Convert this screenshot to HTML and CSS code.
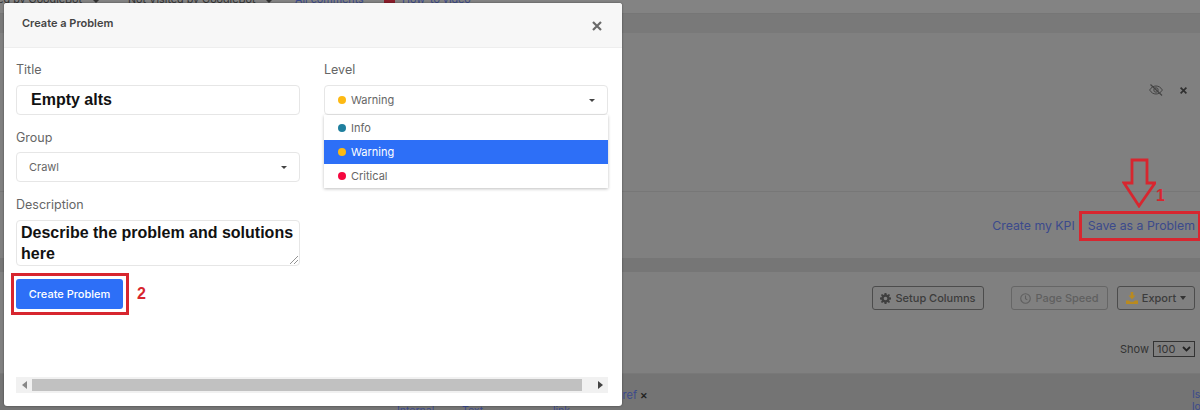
FILE: index.html
```html
<!DOCTYPE html>
<html lang="en">
  <head>
    <meta charset="UTF-8" />
    <meta name="viewport" content="width=device-width, initial-scale=1.0" />
    <title>Create a Problem</title>
    <link rel="stylesheet" href="styles.css">
  </head>
  <body>
    <!-- Dimmed page behind the modal -->
    <div class="page">
      <div class="tabs">
        <span class="tab-first">ed by GoogleBot</span>
        <span class="tab-caret"></span>
        <span class="tab-second">Not Visited by GoogleBot</span>
        <span class="tab-caret"></span>
        <a class="tab-link">All comments</a>
        <span class="video-icon"></span>
        <a class="tab-link">How-to video</a>
      </div>
      <div class="tone-band"></div>

      <section class="panel">
        <div class="panel-icons">
          <svg width="14" height="12" viewBox="0 0 14 12" fill="none" stroke="#444" stroke-width="1">
            <path d="M.6 6C2.400 3.200 4.500 2 7 2s4.600 1.200 6.400 4C11.600 8.800 9.500 10 7 10S2.400 8.800.6 6z" />
            <circle cx="7" cy="6" r="2.200" />
            <path d="M1.500.5l11.500 11" stroke-width="1.200" />
          </svg>
          <svg width="7" height="7" viewBox="0 0 7 7" stroke="#2f2f2f" stroke-width="1.700">
            <path d="M.6.6l5.800 5.800M6.400.6L.6 6.400" />
          </svg>
        </div>
      </section>
      <div class="panel-links">
        <a class="kpi-link">Create my KPI</a>
        <a class="problem-link">Save as a Problem</a>
      </div>
      <div class="tone-band small"></div>

      <section class="toolbar">
        <div class="toolbar-buttons">
          <button class="tool-btn setup-btn">
            <svg width="11" height="11" viewBox="0 0 12 12" fill="#3f3f3f">
              <path d="M5 0h2l.3 1.700 1 .4L9.700 1l1.300 1.300-1.100 1.400.4 1L12 5v2l-1.700.3-.4 1 1.100 1.400L9.700 11l-1.400-1.100-1 .4L7 12H5l-.3-1.700-1-.4L2.300 11 1 9.700l1.100-1.400-.4-1L0 7V5l1.700-.3.4-1L1 2.300 2.300 1l1.400 1.100 1-.4zM6 4a2 2 0 1 0 0 4 2 2 0 0 0 0-4z" />
            </svg>
            Setup Columns
          </button>
          <button class="tool-btn speed-btn">
            <svg width="11" height="11" viewBox="0 0 12 12" fill="none" stroke="#5f5f5f" stroke-width="1.200">
              <circle cx="6" cy="6" r="5.200" />
              <path d="M6 2.800V6.300l2 1.200" />
            </svg>
            Page Speed
          </button>
          <button class="tool-btn export-btn">
            <svg width="12" height="12" viewBox="0 0 12 12" fill="#b98a1f">
              <path d="M4.700 0h2.600v3.500h2.200L6 7.300 2.500 3.500h2.200zM0 8.500h3l1.500 1.300h3L9 8.500h3V12H0z" />
            </svg>
            Export
            <span class="btn-caret"></span>
          </button>
        </div>
        <div class="show-row">
          <span>Show</span>
          <span class="show-select">100
            <svg width="9" height="6" viewBox="0 0 9 6" fill="none" stroke="#222" stroke-width="1.800"><path d="M1 1l3.500 3.500L8 1" /></svg>
          </span>
        </div>
      </section>

      <section class="table-head">
        <div class="filter-tag">href <b>&#10005;</b></div>
        <div class="col-row">
          <a class="col-internal">Internal</a>
          <a class="col-text">Text</a>
          <a class="col-link">link</a>
        </div>
        <a class="col-last">Is<br>lo</a>
      </section>
    </div>

    <!-- Modal -->
    <div class="modal">
      <div class="modal-header">
        <h5 class="modal-title">Create a Problem</h5>
        <svg class="modal-close" width="10" height="10" viewBox="0 0 10 10" stroke="#6a6a6a" stroke-width="2.200">
          <path d="M1 1l8 8M9 1l-8 8" />
        </svg>
      </div>
      <div class="modal-body">
        <div class="col">
          <label class="form-label">Title</label>
          <div class="form-input title-input">Empty alts</div>
          <label class="form-label">Group</label>
          <div class="form-input select-input group-select">
            <span>Crawl</span>
            <span class="caret"></span>
          </div>
          <label class="form-label">Description</label>
          <div class="form-input desc-input">
            Describe the problem and solutions here
            <svg class="resize-grip" width="8" height="8" viewBox="0 0 8 8" stroke="#777" stroke-width="0.800">
              <path d="M0 8l8-8M4 8l4-4" />
            </svg>
          </div>
          <button class="submit-btn">Create Problem</button>
        </div>
        <div class="col level-col">
          <label class="form-label">Level</label>
          <div class="form-input select-input level-select">
            <span class="level-value"><i class="dot yellow"></i>Warning</span>
            <span class="caret"></span>
          </div>
          <ul class="level-menu">
            <li class="level-item"><i class="dot teal"></i>Info</li>
            <li class="level-item active"><i class="dot yellow"></i>Warning</li>
            <li class="level-item"><i class="dot red"></i>Critical</li>
          </ul>
        </div>
      </div>
      <div class="scrollbar">
        <span class="arrow-left"></span>
        <span class="thumb"></span>
        <span class="arrow-right"></span>
      </div>
    </div>

    <!-- Red tutorial marks -->
    <svg class="mark-arrow" width="34" height="50" viewBox="0 0 34 50" fill="none" stroke="#d7262f" stroke-width="2.800">
      <path d="M10 2h15v23h8L17 48 2 25h8z" />
    </svg>
    <span class="mark-num one">1</span>
    <div class="mark-box box-save"></div>
    <div class="mark-box box-create"></div>
    <span class="mark-num two">2</span>
  </body>
</html>
```

FILE: styles.css
```css
* {
  margin: 0;
  padding: 0;
  box-sizing: border-box;
  font-family: "Inter", sans-serif;
}

body {
  width: 1200px;
  height: 410px;
  overflow: hidden;
  background: #808080;
  position: relative;
}

/* Page behind the modal */
.page {
  height: 410px;
  overflow: hidden;
  color: #3a3a3a;
  font-size: 11px;
}

.tabs {
  height: 13px;
  background: #838383;
  display: flex;
  align-items: flex-start;
  line-height: 13px;
  font-size: 10.750px;
  overflow: hidden;
  color: #333;
}

.tabs > * {
  position: relative;
  top: -7px;
  flex: none;
}

.tab-first {
  width: 82px;
  text-align: right;
  white-space: nowrap;
  direction: rtl;
}

.tab-second {
  width: 127px;
  margin-left: 29px;
  white-space: nowrap;
}

.tabs .tab-caret {
  top: 0;
  margin-left: 11px;
  border-top: 3px solid #333;
  border-left: 3.500px solid transparent;
  border-right: 3.500px solid transparent;
}

.tab-link {
  color: #3b4a8c;
  width: 89px;
}

.tab-caret + .tab-link {
  margin-left: 23px;
}

.tabs .video-icon {
  width: 11px;
  height: 6px;
  background: #8a1c2a;
  border-radius: 0 0 2px 2px;
  margin-right: 7px;
  top: 0;
}

.tone-band {
  height: 20px;
  background: #797979;
  border-top: 1px solid #767676;
}

.tone-band.small {
  height: 14px;
  background: #767676;
  border-top: none;
}

.panel {
  height: 159px;
  border-bottom: 1px solid #777;
  padding: 51px 13px 0 0;
}

.panel-icons {
  display: flex;
  justify-content: flex-end;
  align-items: center;
  gap: 17px;
}

.panel-links {
  height: 66px;
  display: flex;
  justify-content: flex-end;
  gap: 13px;
  padding: 26px 5px 0 0;
  font-size: 12.300px;
  color: #3b4a8c;
}

.toolbar {
  height: 102px;
  padding: 14px 5px 0 0;
  display: flex;
  flex-direction: column;
  align-items: flex-end;
  border-bottom: 1px solid #787878;
}

.toolbar-buttons {
  display: flex;
}

.tool-btn {
  height: 24px;
  display: flex;
  align-items: center;
  justify-content: center;
  gap: 4px;
  background: transparent;
  border: 1px solid #4c4c4c;
  border-radius: 3px;
  font-size: 11px;
  font-weight: 500;
  color: #3c3c3c;
}

.setup-btn {
  width: 112px;
  margin-right: 27px;
}

.speed-btn {
  width: 97px;
  margin-right: 9px;
  color: #5f5f5f;
  border-color: #666;
}

.export-btn {
  width: 78px;
}

.btn-caret {
  border-top: 4px solid #333;
  border-left: 3.500px solid transparent;
  border-right: 3.500px solid transparent;
}

.show-row {
  display: flex;
  align-items: center;
  gap: 4px;
  margin-top: 31px;
  font-size: 11px;
  color: #333;
}

.show-select {
  width: 42px;
  height: 16px;
  border: 1px solid #333;
  display: flex;
  align-items: center;
  justify-content: space-between;
  padding: 0 3px;
}

.table-head {
  height: 36px;
  background: #747474;
  position: relative;
  font-size: 10.500px;
  color: #3b4a8c;
}

.filter-tag {
  padding: 15px 0 0 616px;
  line-height: 13px;
  font-size: 11px;
}

.filter-tag b {
  color: #222;
  font-size: 9px;
}

.col-row {
  display: flex;
  padding-left: 397px;
  margin-top: 2px;
}

.col-internal {
  width: 65px;
}

.col-text {
  width: 91px;
}

.col-last {
  position: absolute;
  left: 1192px;
  top: 15px;
  line-height: 12px;
}

/* Modal */
.modal {
  position: absolute;
  left: 4px;
  top: 3px;
  width: 618px;
  height: 403px;
  background: #ffffff;
  border-radius: 3px;
  box-shadow: 0 0 2px rgba(0, 0, 0, 0.5);
  display: flex;
  flex-direction: column;
}

.modal-header {
  height: 45px;
  background: #f7f7f7;
  border-bottom: 1px solid #eeeeee;
  border-radius: 3px 3px 0 0;
  display: flex;
  justify-content: space-between;
  align-items: flex-start;
  padding: 14px 20px 0 18px;
}

.modal-title {
  font-size: 11px;
  font-weight: 600;
  line-height: 13px;
  color: #444;
}

.modal-close {
  margin-top: 4px;
}

.modal-body {
  height: 329px;
  display: grid;
  grid-template-columns: 284px 284px;
  column-gap: 24px;
  padding: 14px 0 0 12px;
}

.col {
  position: relative;
}

.form-label {
  display: block;
  height: 16px;
  line-height: 16px;
  margin-bottom: 7px;
  font-size: 12.500px;
  color: #666;
}

.form-input {
  width: 284px;
  background: #fff;
  border: 1px solid #e6e6e6;
  border-radius: 4px;
  margin-bottom: 14px;
  color: #666;
  font-size: 11px;
}

.title-input {
  height: 30px;
  margin-bottom: 15px;
  padding-left: 14px;
  line-height: 27px;
  font-family: "Liberation Sans", sans-serif;
  font-size: 16px;
  font-weight: 700;
  color: #111;
}

.title-input + .form-label {
  margin-bottom: 6px;
}

.select-input {
  height: 30px;
  display: flex;
  justify-content: space-between;
  align-items: center;
  padding: 0 12px;
}

.group-select {
  margin-bottom: 15px;
}

.caret {
  border-top: 3.500px solid #444;
  border-left: 3.500px solid transparent;
  border-right: 3.500px solid transparent;
}

.desc-input {
  height: 46px;
  position: relative;
  padding: 2px 4px;
  line-height: 20.500px;
  font-family: "Liberation Sans", sans-serif;
  font-size: 16px;
  font-weight: 700;
  color: #111;
  margin-bottom: 13px;
}

.resize-grip {
  position: absolute;
  right: 1px;
  bottom: 1px;
}

.submit-btn {
  display: block;
  width: 107px;
  height: 30px;
  background: #2d6ff7;
  color: #fff;
  border: none;
  border-radius: 3px;
  font-size: 11px;
  font-weight: 500;
}

.level-select {
  margin-bottom: 0;
  padding-left: 13px;
}

.level-value,
.level-item {
  display: flex;
  align-items: center;
  gap: 5px;
}

.dot {
  width: 8px;
  height: 8px;
  border-radius: 50%;
}

.dot.yellow {
  background: #fdb913;
}

.dot.teal {
  background: #1f7f9e;
}

.dot.red {
  background: #f5073f;
}

.level-menu {
  position: absolute;
  top: 53px;
  left: 0;
  width: 284px;
  height: 73px;
  padding-top: 1px;
  list-style: none;
  background: #fff;
  box-shadow: 0 1px 3px rgba(0, 0, 0, 0.25);
  font-size: 11px;
  color: #666;
}

.level-item {
  height: 24px;
  padding: 0 14px;
}

.level-item.active {
  background: #2d6ff7;
  color: #fff;
}

.scrollbar {
  margin-left: 12px;
  width: 592px;
  height: 16px;
  background: #f1f1f1;
  display: flex;
  align-items: center;
  padding: 2px 0;
}

.thumb {
  width: 550px;
  height: 12px;
  background: #c1c1c1;
}

.arrow-left,
.arrow-right {
  width: 16px;
  display: flex;
  justify-content: center;
}

.arrow-left::before {
  content: "";
  border-right: 5px solid #888;
  border-top: 4px solid transparent;
  border-bottom: 4px solid transparent;
}

.arrow-right {
  width: 26px;
  justify-content: flex-end;
  padding-right: 5px;
}

.arrow-right::before {
  content: "";
  border-left: 5px solid #444;
  border-top: 4px solid transparent;
  border-bottom: 4px solid transparent;
}

/* Red tutorial marks */
.mark-box {
  position: absolute;
  border: 3px solid #d7262f;
}

.box-save {
  left: 1079px;
  top: 211px;
  width: 122px;
  height: 30px;
}

.box-create {
  left: 11px;
  top: 273px;
  width: 118px;
  height: 42px;
}

.mark-arrow {
  position: absolute;
  left: 1122px;
  top: 158px;
}

.mark-num {
  position: absolute;
  color: #d7262f;
  font-family: "Liberation Sans", sans-serif;
  font-size: 16px;
  line-height: 16px;
  font-weight: 700;
}

.mark-num.one {
  left: 1156px;
  top: 188px;
}

.mark-num.two {
  left: 137px;
  top: 286px;
}
```
